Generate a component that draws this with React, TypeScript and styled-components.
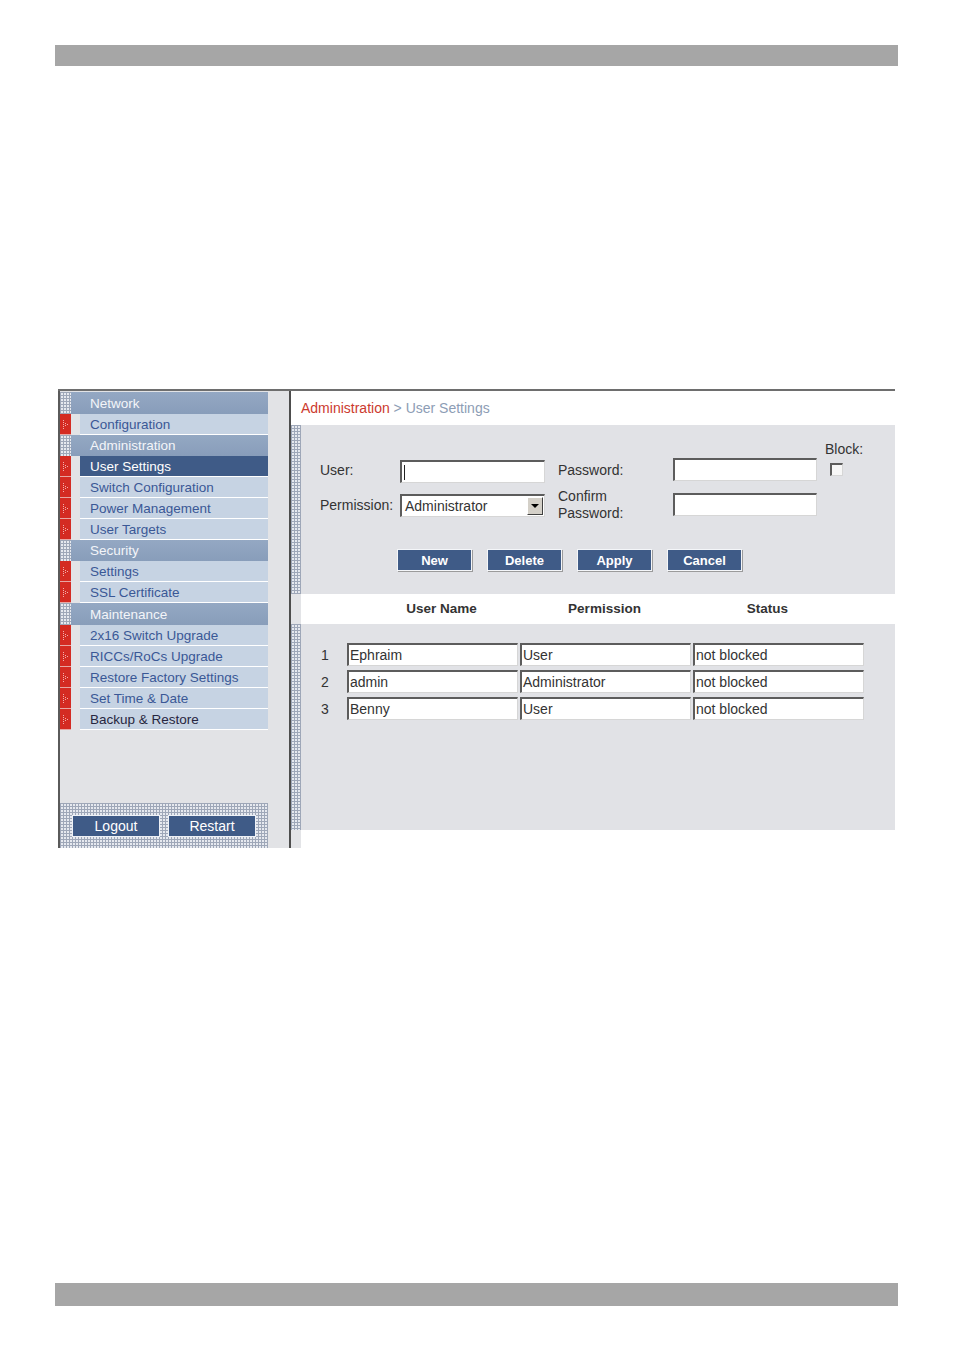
import styled, { createGlobalStyle, css } from "styled-components";
import { Fragment } from "react";

const GlobalStyle = createGlobalStyle`
  html, body {
    margin: 0;
    padding: 0;
    background: #ffffff;
  }
  body {
    font-family: "Liberation Sans", Arial, sans-serif;
  }
  * {
    box-sizing: border-box;
  }
`;

const checkered = css`
  background-color: #e6e9ef;
  background-image: linear-gradient(90deg, #9ea7b8 1px, transparent 1px),
    linear-gradient(#9ea7b8 1px, transparent 1px);
  background-size: 3px 3px;
`;

const Page = styled.div`
  width: 954px;
  height: 1352px;
  display: flex;
  flex-direction: column;
  padding-top: 45px;
`;

const PageBar = styled.div<{ $top: number; $height: number }>`
  margin: ${(p) => p.$top}px 0 0 55px;
  width: 843px;
  height: ${(p) => p.$height}px;
  background: #a6a6a6;
`;

const Frame = styled.div`
  margin: 323px 0 0 58px;
  width: 837px;
  height: 459px;
  border-top: 2px solid #6e6e6e;
  display: flex;
`;

const Sidebar = styled.div`
  width: 233px;
  border-left: 2px solid #5a5a5a;
  border-right: 2px solid #4d4d4d;
  background: #e2e3e6;
  display: flex;
  flex-direction: column;
`;

const Menu = styled.div`
  width: 208px;
  padding-top: 1px;
  display: flex;
  flex-direction: column;
`;

const HeaderRow = styled.div<{ $tall?: boolean }>`
  display: flex;
  height: ${(p) => (p.$tall ? 22 : 21)}px;
`;

const HeaderMarker = styled.div`
  width: 11px;
  ${checkered}
`;

const HeaderLabel = styled.div`
  flex: 1;
  display: flex;
  align-items: center;
  padding-left: 19px;
  background: linear-gradient(#94a8c3, #889dba);
  color: #f3f5f9;
  font-size: 13.5px;
`;

const ItemRow = styled.div`
  display: flex;
  height: 21px;
`;

const ItemMarker = styled.div`
  width: 11px;
  background: #d42b22;
  border-bottom: 1px solid #e7a7a3;
  display: flex;
  align-items: center;
  justify-content: center;
`;

const ItemGap = styled.div`
  width: 9px;
`;

const ItemLabel = styled.div<{ $active?: boolean; $dark?: boolean }>`
  flex: 1;
  display: flex;
  align-items: center;
  padding-left: 10px;
  font-size: 13.5px;
  border-bottom: 1px solid #ffffff;
  background: ${(p) => (p.$active ? "#3f5b87" : "#c6d3e3")};
  color: ${(p) => (p.$active ? "#ffffff" : p.$dark ? "#262640" : "#3a5896")};
`;

const SideFooter = styled.div`
  margin-top: auto;
  width: 208px;
  height: 45px;
  padding: 12px 0 0 12px;
  display: flex;
  gap: 8px;
  ${checkered}
`;

const SideButton = styled.div`
  width: 88px;
  height: 22px;
  background: #3f5b87;
  border: 1px solid #eef1f6;
  color: #ffffff;
  font-size: 14px;
  display: flex;
  align-items: center;
  justify-content: center;
`;

const Main = styled.div`
  width: 604px;
  display: flex;
  flex-direction: column;
`;

const Breadcrumb = styled.div`
  height: 34px;
  padding-left: 10px;
  display: flex;
  align-items: center;
  font-size: 14px;
  background: #ffffff;
`;

const Crumb = styled.span<{ $current?: boolean }>`
  color: ${(p) => (p.$current ? "#8d9db5" : "#cc3a2e")};
  white-space: pre;
`;

const Section = styled.div<{ $height: number }>`
  display: flex;
  height: ${(p) => p.$height}px;
`;

const Strip = styled.div<{ $pattern?: boolean }>`
  width: 10px;
  ${(p) => (p.$pattern ? checkered : "background: #e3e4e7;")}
`;

const SectionBody = styled.div<{ $white?: boolean }>`
  flex: 1;
  background: ${(p) => (p.$white ? "#ffffff" : "#e1e2e6")};
`;

const FormBody = styled(SectionBody)`
  padding: 18px 0 0 19px;
  display: flex;
  flex-direction: column;
`;

const FormGrid = styled.div`
  display: grid;
  grid-template-columns: 80px 145px 13px 115px 144px 8px 50px;
  grid-template-rows: 15px 25px 10px 24px;
  grid-template-areas:
    ". . . . . . blk"
    "ulab uin . plab pin . chk"
    ". . . . . . ."
    "rlab sel . clab cin . .";
  font-size: 14px;
  color: #333333;
`;

const Area = styled.div<{ $area: string; $align?: string }>`
  grid-area: ${(p) => p.$area};
  align-self: ${(p) => p.$align || "center"};
`;

const Label = styled(Area)`
  line-height: 17px;
`;

const BlockLabel = styled(Label)`
  margin-top: -2px;
`;

const fieldBorder = css`
  background: #ffffff;
  border-top: 2px solid #5c5c5c;
  border-left: 2px solid #5c5c5c;
  border-right: 1px solid #d6d6d6;
  border-bottom: 1px solid #d6d6d6;
`;

const Field = styled(Area)`
  ${fieldBorder}
  height: 23px;
  display: flex;
  align-items: center;
  padding-left: 1px;
  font-size: 14px;
  color: #333333;
`;

const Caret = styled.span`
  width: 1px;
  height: 15px;
  margin-left: 1px;
  background: #222222;
`;

const SelectText = styled.span`
  flex: 1;
  padding-left: 2px;
`;

const ArrowButton = styled.div`
  width: 16px;
  height: 18px;
  margin-right: 1px;
  background: #d4d0c8;
  border-top: 1px solid #ffffff;
  border-left: 1px solid #ffffff;
  border-right: 1px solid #404040;
  border-bottom: 1px solid #404040;
  display: flex;
  align-items: center;
  justify-content: center;
  &::after {
    content: "";
    border-left: 4px solid transparent;
    border-right: 4px solid transparent;
    border-top: 4px solid #000000;
  }
`;

const Checkbox = styled(Area)`
  ${fieldBorder}
  width: 13px;
  height: 13px;
  margin: 5px 0 0 5px;
  background: #f7f7f7;
`;

const ButtonRow = styled.div`
  margin: 32px 0 0 77px;
  display: flex;
  gap: 15px;
`;

const ActionButton = styled.div`
  width: 75px;
  height: 22px;
  background: #3f5b87;
  border: 1px solid #f4f6f9;
  box-shadow: 1px 1px 0 #9b9b9b;
  color: #ffffff;
  font-size: 13px;
  font-weight: 700;
  display: flex;
  align-items: center;
  justify-content: center;
`;

const ColumnHeads = styled(SectionBody)`
  display: flex;
  padding-left: 59px;
`;

const ColumnHead = styled.div`
  width: 163px;
  text-align: center;
  line-height: 30px;
  font-size: 13.5px;
  font-weight: 700;
  color: #333333;
`;

const UserTable = styled(SectionBody)`
  padding: 19px 0 0 20px;
  display: grid;
  grid-template-columns: 24px 171px 171px 171px;
  grid-auto-rows: 23px;
  column-gap: 2px;
  row-gap: 4px;
  align-content: start;
  font-size: 14px;
  color: #333333;
`;

const RowNumber = styled.div`
  display: flex;
  align-items: center;
`;

const TableCell = styled.div`
  ${fieldBorder}
  display: flex;
  align-items: center;
  padding-left: 1px;
`;

const MarkerDots = () => (
  <svg width="7" height="11" viewBox="0 0 7 11">
    <g fill="#f2b0ac">
      <rect x="1" y="1" width="1" height="1" />
      <rect x="1" y="3" width="1" height="1" />
      <rect x="1" y="5" width="1" height="1" />
      <rect x="1" y="7" width="1" height="1" />
      <rect x="1" y="9" width="1" height="1" />
      <rect x="3" y="4" width="1" height="1" />
      <rect x="3" y="6" width="1" height="1" />
      <rect x="5" y="5" width="1" height="1" />
    </g>
  </svg>
);

type MenuEntry =
  | { kind: "header"; label: string; tall?: boolean }
  | { kind: "item"; label: string; active?: boolean; dark?: boolean };

const menu: MenuEntry[] = [
  { kind: "header", label: "Network", tall: true },
  { kind: "item", label: "Configuration" },
  { kind: "header", label: "Administration" },
  { kind: "item", label: "User Settings", active: true },
  { kind: "item", label: "Switch Configuration" },
  { kind: "item", label: "Power Management" },
  { kind: "item", label: "User Targets" },
  { kind: "header", label: "Security" },
  { kind: "item", label: "Settings" },
  { kind: "item", label: "SSL Certificate" },
  { kind: "header", label: "Maintenance", tall: true },
  { kind: "item", label: "2x16 Switch Upgrade" },
  { kind: "item", label: "RICCs/RoCs Upgrade" },
  { kind: "item", label: "Restore Factory Settings" },
  { kind: "item", label: "Set Time & Date" },
  { kind: "item", label: "Backup & Restore", dark: true },
];

const users = [
  { name: "Ephraim", permission: "User", status: "not blocked" },
  { name: "admin", permission: "Administrator", status: "not blocked" },
  { name: "Benny", permission: "User", status: "not blocked" },
];

const App = () => {
  return (
    <>
      <GlobalStyle />
      <Page>
        <PageBar $top={0} $height={21} />
        <Frame>
          <Sidebar>
            <Menu>
              {menu.map((entry) =>
                entry.kind === "header" ? (
                  <HeaderRow key={entry.label} $tall={entry.tall}>
                    <HeaderMarker />
                    <HeaderLabel>{entry.label}</HeaderLabel>
                  </HeaderRow>
                ) : (
                  <ItemRow key={entry.label}>
                    <ItemMarker>
                      <MarkerDots />
                    </ItemMarker>
                    <ItemGap />
                    <ItemLabel $active={entry.active} $dark={entry.dark}>
                      {entry.label}
                    </ItemLabel>
                  </ItemRow>
                )
              )}
            </Menu>
            <SideFooter>
              <SideButton>Logout</SideButton>
              <SideButton>Restart</SideButton>
            </SideFooter>
          </Sidebar>
          <Main>
            <Breadcrumb>
              <Crumb>Administration</Crumb>
              <Crumb $current> &gt; User Settings</Crumb>
            </Breadcrumb>
            <Section $height={169}>
              <Strip $pattern />
              <FormBody>
                <FormGrid>
                  <BlockLabel $area="blk" $align="start">Block:</BlockLabel>
                  <Label $area="ulab">User:</Label>
                  <Field $area="uin" $align="end">
                    <Caret />
                  </Field>
                  <Label $area="plab">Password:</Label>
                  <Field $area="pin" $align="start" />
                  <Checkbox $area="chk" $align="start" />
                  <Label $area="rlab">Permission:</Label>
                  <Field $area="sel" $align="end">
                    <SelectText>Administrator</SelectText>
                    <ArrowButton />
                  </Field>
                  <Label $area="clab">
                    Confirm
                    <br />
                    Password:
                  </Label>
                  <Field $area="cin" $align="start" />
                </FormGrid>
                <ButtonRow>
                  <ActionButton>New</ActionButton>
                  <ActionButton>Delete</ActionButton>
                  <ActionButton>Apply</ActionButton>
                  <ActionButton>Cancel</ActionButton>
                </ButtonRow>
              </FormBody>
            </Section>
            <Section $height={30}>
              <Strip />
              <ColumnHeads $white>
                <ColumnHead>User Name</ColumnHead>
                <ColumnHead>Permission</ColumnHead>
                <ColumnHead>Status</ColumnHead>
              </ColumnHeads>
            </Section>
            <Section $height={206}>
              <Strip $pattern />
              <UserTable>
                {users.map((user, index) => (
                  <Fragment key={user.name}>
                    <RowNumber>{index + 1}</RowNumber>
                    <TableCell>{user.name}</TableCell>
                    <TableCell>{user.permission}</TableCell>
                    <TableCell>{user.status}</TableCell>
                  </Fragment>
                ))}
              </UserTable>
            </Section>
            <Section $height={18}>
              <Strip />
              <SectionBody $white />
            </Section>
          </Main>
        </Frame>
        <PageBar $top={435} $height={23} />
      </Page>
    </>
  );
};

export default App;
